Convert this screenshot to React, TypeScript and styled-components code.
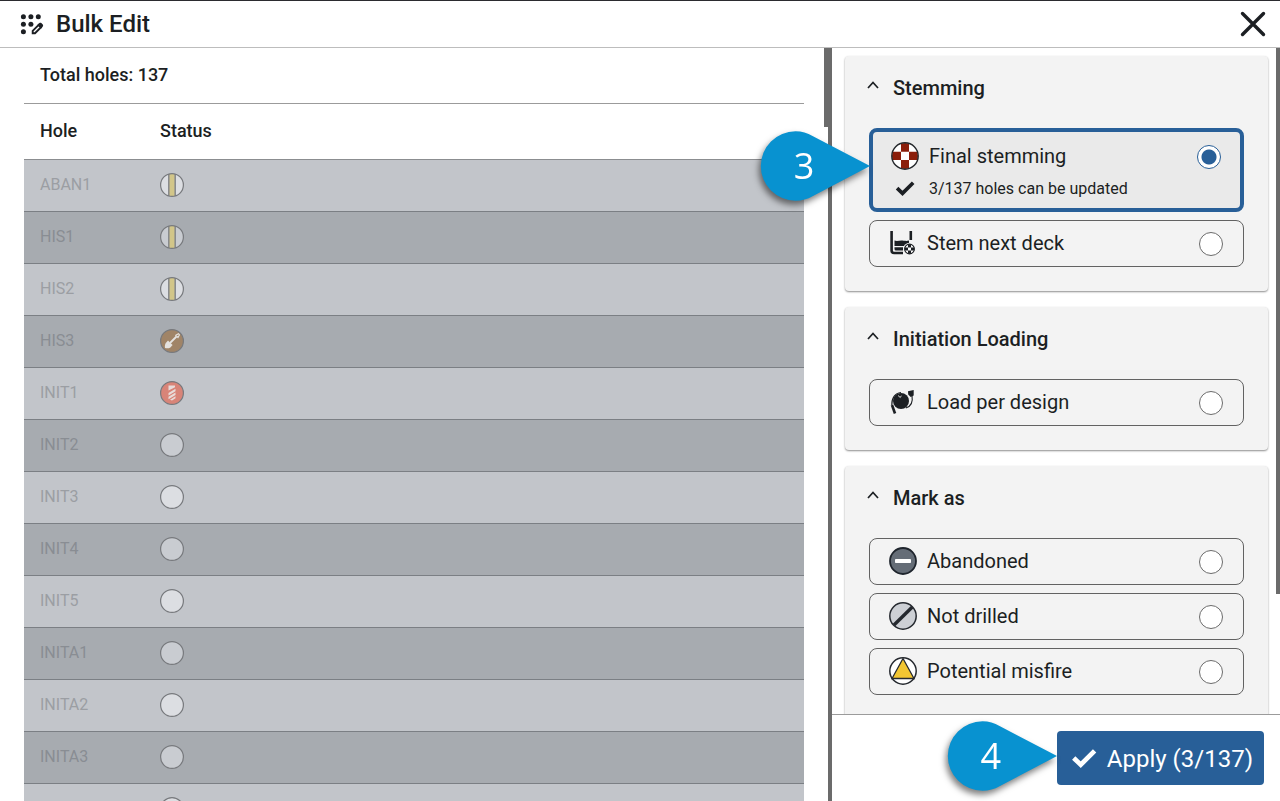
import React, { useState } from "react";
import type { ReactNode } from "react";
import styled, { createGlobalStyle } from "styled-components";

const GlobalStyle = createGlobalStyle`
  *, *::before, *::after { box-sizing: border-box; }
  body {
    margin: 0;
    background: #fff;
    color: #1c1f23;
    font-family: Roboto, "Liberation Sans", sans-serif;
  }
`;

const Screen = styled.div`
  display: flex;
  flex-direction: column;
  height: 100vh;
  overflow: hidden;
  border-top: 1px solid #2b2b2f;
`;

const Header = styled.header`
  flex: none;
  display: flex;
  align-items: center;
  gap: 12px;
  height: 47px;
  padding: 0 12px 0 20px;
  border-bottom: 1px solid #bdbdbd;
`;

const Title = styled.h1`
  flex: 1;
  margin: 0;
  font-size: 24px;
  line-height: 32px;
  font-weight: 500;
`;

const CloseButton = styled.button`
  display: flex;
  padding: 0;
  border: 0;
  background: none;
  color: inherit;
`;

const Main = styled.main`
  flex: 1;
  min-height: 0;
  display: grid;
  grid-template-columns: 65% 35%;
`;

const HolesPane = styled.section`
  display: flex;
  min-height: 0;
  border-right: 4px solid #6b6b6b;
`;

const HolesScroll = styled.div`
  flex: 1;
  overflow: hidden;
  padding: 0 20px 0 24px;
`;

const ScrollTrack = styled.div`
  flex: none;
  width: 4px;
`;

const ScrollThumb = styled.div<{ $length: string }>`
  height: ${(p) => p.$length};
  background: #6b6b6b;
`;

const HolesTable = styled.table`
  width: 100%;
  table-layout: fixed;
  border-collapse: separate;
  border-spacing: 0;
  text-align: left;
`;

const TotalCaption = styled.caption`
  height: 56px;
  padding: 0 16px;
  border-bottom: 1px solid #9b9b9b;
  font-size: 18px;
  line-height: 54px;
  font-weight: 500;
  text-align: left;
`;

const HeadCell = styled.th<{ $width?: string }>`
  width: ${(p) => p.$width ?? "auto"};
  height: 56px;
  padding: 0 16px 2px;
  border-bottom: 1px solid #8b8d90;
  font-size: 18px;
  font-weight: 500;
`;

const HoleRow = styled.tr`
  background: #c2c5ca;
  color: #9b9ea3;
  --status-fill: #dcdee2;

  &:nth-child(even) {
    background: #a7abb0;
    color: #898d93;
    --status-fill: #c9ccd1;
  }
`;

const HoleCell = styled.td`
  height: 52px;
  padding: 0 16px 2px;
  border-bottom: 1px solid #7b7f84;
  font-size: 16px;
  line-height: 16px;

  svg { display: block; }
`;

const ActionsPane = styled.aside`
  position: relative;
  display: flex;
  flex-direction: column;
  min-height: 0;
`;

const ActionsBody = styled.div`
  flex: 1;
  min-height: 0;
  display: flex;
`;

const CardList = styled.div`
  flex: 1;
  display: flex;
  flex-direction: column;
  gap: 16px;
  overflow: hidden;
  padding: 8px 8px 0 13px;
`;

const Card = styled.section`
  flex: none;
  padding: 0 24px 24px 22px;
  border-radius: 4px;
  background: #f3f3f3;
  box-shadow: 0 1px 2px rgba(0, 0, 0, 0.45);
`;

const CardToggle = styled.button`
  display: flex;
  align-items: center;
  gap: 12px;
  width: 100%;
  height: 72px;
  padding: 0 0 8px;
  border: 0;
  background: none;
  color: inherit;
  font: 500 20px/24px Roboto, "Liberation Sans", sans-serif;
  text-align: left;
`;

const OptionList = styled.div`
  display: flex;
  flex-direction: column;
  gap: 8px;
  padding-left: 2px;
`;

const Option = styled.label<{ $selected: boolean }>`
  display: grid;
  grid-template-columns: 28px 1fr 24px;
  gap: 3px 10px;
  align-items: center;
  padding: ${(p) => (p.$selected ? "9px 19px 4px 18px" : "7px 20px 8px 19px")};
  border: ${(p) => (p.$selected ? "4px solid #285f98" : "1px solid #626262")};
  border-radius: 8px;
  background: ${(p) => (p.$selected ? "#eaeaea" : "transparent")};

  svg { display: block; justify-self: center; }
`;

const OptionText = styled.span`
  font-size: 20px;
  line-height: 30px;
`;

const OptionNote = styled.span`
  font-size: 16px;
  line-height: 30px;
`;

const Radio = styled.input`
  appearance: none;
  width: 24px;
  height: 24px;
  margin: 2px 0 0;
  border: 1px solid #6b6b6b;
  border-radius: 50%;
  background: #fff;

  &:checked {
    border-color: #285f98;
    background: radial-gradient(circle, #285f98 7px, #fff 8px);
  }
`;

const Footer = styled.footer`
  flex: none;
  display: flex;
  justify-content: flex-end;
  padding: 16px;
  border-top: 1px solid #9b9b9b;
`;

const ApplyWrap = styled.div`
  position: relative;
`;

const ApplyButton = styled.button`
  display: flex;
  align-items: center;
  gap: 10px;
  height: 54px;
  padding: 2px 11px 0 14px;
  border: 0;
  border-radius: 4px;
  background: #285f98;
  color: #fff;
  font: 400 24px/28px Roboto, "Liberation Sans", sans-serif;
`;

const CalloutBox = styled.div<{ $top: number; $right: string }>`
  position: absolute;
  z-index: 1;
  top: ${(p) => p.$top}px;
  right: ${(p) => p.$right};
  width: 110px;
  height: 70px;
  filter: drop-shadow(-2px 4px 3px rgba(0, 0, 0, 0.5));

  svg { display: block; }
`;

const CalloutNumber = styled.span`
  position: absolute;
  inset: 0 22px 0 0;
  color: #fff;
  font: 400 36px/70px "Open Sans", "Noto Sans", sans-serif;
  text-align: center;
`;

function Callout({ n, top, right }: { n: number; top: number; right: string }) {
  return (
    <CalloutBox $top={top} $right={right}>
      <svg width="110" height="70" viewBox="0 0 110 70">
        <path d="M110 35 L53 5.200 C47 2 42 0.300 35.500 0.300 A34.700 34.700 0 1 0 35.500 69.700 C42 69.700 47 68.300 53 65 Z" fill="#0892d0" />
      </svg>
      <CalloutNumber>{n}</CalloutNumber>
    </CalloutBox>
  );
}

type Status = "stemmed" | "backfill" | "drilled" | "empty";

function StatusIcon({ status }: { status: Status }) {
  const fill = { stemmed: "var(--status-fill)", backfill: "#a08467", drilled: "#d88478", empty: "var(--status-fill)" }[status];
  return (
    <svg width="24" height="24" viewBox="0 0 24 24" role="img" aria-label={status}>
      <circle cx="12" cy="12" r="11.400" fill={fill} />
      {status === "stemmed" && (
        <>
          <rect x="8.600" y="1" width="6.800" height="22" fill="#d2c689" />
          <path d="M8.800 1v22M15.200 1v22" stroke="#85888c" strokeWidth="1.500" />
        </>
      )}
      {status === "backfill" && (
        <>
          <path d="M10 14l6.500-6.500" stroke="#e4e2df" strokeWidth="1.800" />
          <path d="M15.800 6.300l2.700-1.500 1 1-1.500 2.700z" fill="none" stroke="#e4e2df" strokeWidth="1.100" />
          <path d="M8 11.400l4.600 4.600-2.200 2.400c-1.500 1-3.600 1.200-5.400.6-.4-1.900 0-4 1-5.300z" fill="#e4e2df" />
        </>
      )}
      {status === "drilled" && (
        <path d="M8.500 4.500H15v1.800L8.500 9.500zM8.500 12l7-4.300v2.500l-7 4.300zM8.500 15.800l7-4.200v2.500l-7 4.200zM10 18.700l5.500-3.400v2L12 19.500z" fill="#e8dcda" />
      )}
      <circle cx="12" cy="12" r="11.400" fill="none" stroke="#77797d" strokeWidth="1.200" />
    </svg>
  );
}

function BulkEditIcon() {
  return (
    <svg width="24" height="24" viewBox="0 0 24 24" aria-hidden="true">
      <g fill="#1c1f23">
        <circle cx="3.400" cy="4.700" r="2.500" />
        <circle cx="10.900" cy="4.700" r="2.500" />
        <circle cx="18.300" cy="4.700" r="2.500" />
        <circle cx="3.400" cy="12.200" r="2.500" />
        <circle cx="10.900" cy="12.200" r="2.500" />
        <circle cx="3.400" cy="19.700" r="2.500" />
      </g>
      <path d="M12.700 18.900l5.800-5.800 2.300 2.300-5.800 5.800h-2.300z" fill="none" stroke="#1c1f23" strokeWidth="1.900" />
      <path d="M17.500 12.600l1.900-1.600c.6-.5 1.300-.5 1.900 0l1.500 1.500c.5.600.5 1.300 0 1.900L21.300 16.400z" fill="#1c1f23" />
    </svg>
  );
}

function CloseIcon() {
  return (
    <svg width="30" height="30" viewBox="0 0 30 30" aria-hidden="true">
      <path d="M4.500 4.500l21 21M25.500 4.500l-21 21" stroke="#1c1f23" strokeWidth="3.400" strokeLinecap="round" />
    </svg>
  );
}

function ChevronIcon() {
  return (
    <svg width="14" height="16" viewBox="0 0 14 16" aria-hidden="true">
      <path d="M1 8l5-5.500L11 8" fill="none" stroke="#1c1f23" strokeWidth="1.700" />
    </svg>
  );
}

function CheckIcon({ width, color }: { width: number; color: string }) {
  return (
    <svg width={width} height={width} viewBox="0 0 24 24" aria-hidden="true">
      <path d="M2.500 11L9 17.200 21.800 4.500" fill="none" stroke={color} strokeWidth="4.400" />
    </svg>
  );
}

function FinalStemmingIcon() {
  return (
    <svg width="28" height="28" viewBox="0 0 28 28" aria-hidden="true">
      <clipPath id="stemming-disc"><circle cx="14" cy="14" r="13" /></clipPath>
      <circle cx="14" cy="14" r="13" fill="#fff" />
      <path clipPath="url(#stemming-disc)" fill="#8b1e0b" d="M10 0h8v9.800h-8zM10 18h8v10h-8zM1 9.800h9V18H1zM18 9.800h9V18h-9z" />
      <circle cx="14" cy="14" r="13.200" fill="none" stroke="#25282c" strokeWidth="1.400" />
    </svg>
  );
}

function StemNextDeckIcon() {
  return (
    <svg width="28" height="28" viewBox="0 0 28 28" aria-hidden="true">
      <path d="M2.600 2v19.500q0 2.500 2.500 2.500H14M21.800 2v9" fill="none" stroke="#1c1f23" strokeWidth="2.600" />
      <path d="M5.500 11.500c3 1.200 5-.4 8 0s4 .6 6.500 0v3.300c-2 .5-3.500 1.200-5 2.200H5.500zM5.500 18.200H14v3.200H7q-1.500 0-1.500-1.500z" fill="#1c1f23" />
      <circle cx="20.500" cy="20" r="6.200" fill="#f3f3f3" />
      <circle cx="20.500" cy="20" r="4.900" fill="#fff" stroke="#1c1f23" strokeWidth="1.100" />
      <path d="M19 15.300h3v3.200h-3zM19 21.500h3v3.200h-3zM15.800 18.500H19v3h-3.200zM22 18.500h3.200v3H22z" fill="#1c1f23" />
    </svg>
  );
}

function LoadPerDesignIcon() {
  return (
    <svg width="28" height="28" viewBox="-1 0 28 28" aria-hidden="true">
      <circle cx="11" cy="13" r="8" fill="#1c1f23" />
      <path d="M11 4.500C5 5 1.500 10 1.800 17M22 7.500c1 6-1 11-6.200 12.500" fill="none" stroke="#1c1f23" strokeWidth="1.100" />
      <path d="M2 17l3 8.500" stroke="#1c1f23" strokeWidth="2.600" />
      <path d="M18 3.200L23.700 2v5.500l-3 1.400-2.500-2.500z" fill="#1c1f23" />
      <path d="M8 7.500l2.300 2 1-1.800" fill="none" stroke="#d5d5d5" strokeWidth="1" />
    </svg>
  );
}

function AbandonedIcon() {
  return (
    <svg width="28" height="28" viewBox="0 0 28 28" aria-hidden="true">
      <circle cx="14" cy="14" r="13" fill="#656d77" stroke="#1f252d" strokeWidth="1.800" />
      <rect x="6" y="12" width="16" height="4" rx="0.800" fill="#fff" />
    </svg>
  );
}

function NotDrilledIcon() {
  return (
    <svg width="28" height="28" viewBox="0 0 28 28" aria-hidden="true">
      <circle cx="14" cy="14" r="13.200" fill="#cdd0d5" stroke="#25292f" strokeWidth="1.500" />
      <path d="M5 23L23.300 5" stroke="#25292f" strokeWidth="3.400" />
    </svg>
  );
}

function MisfireIcon() {
  return (
    <svg width="28" height="28" viewBox="0 0 28 28" aria-hidden="true">
      <circle cx="14" cy="14" r="13.200" fill="#fff" stroke="#25292f" strokeWidth="1.500" />
      <path d="M14 1.500L25 21.500H3z" fill="#f2c633" stroke="#25292f" strokeWidth="1.300" />
    </svg>
  );
}

const holes: [string, Status][] = [
  ["ABAN1", "stemmed"],
  ["HIS1", "stemmed"],
  ["HIS2", "stemmed"],
  ["HIS3", "backfill"],
  ["INIT1", "drilled"],
  ["INIT2", "empty"],
  ["INIT3", "empty"],
  ["INIT4", "empty"],
  ["INIT5", "empty"],
  ["INITA1", "empty"],
  ["INITA2", "empty"],
  ["INITA3", "empty"],
  ["INITA4", "empty"],
];

const groups: { title: string; options: { label: string; icon: ReactNode }[] }[] = [
  {
    title: "Stemming",
    options: [
      { label: "Final stemming", icon: <FinalStemmingIcon /> },
      { label: "Stem next deck", icon: <StemNextDeckIcon /> },
    ],
  },
  { title: "Initiation Loading", options: [{ label: "Load per design", icon: <LoadPerDesignIcon /> }] },
  {
    title: "Mark as",
    options: [
      { label: "Abandoned", icon: <AbandonedIcon /> },
      { label: "Not drilled", icon: <NotDrilledIcon /> },
      { label: "Potential misfire", icon: <MisfireIcon /> },
    ],
  },
];

export default function App() {
  const [action, setAction] = useState("Final stemming");
  return (
    <Screen>
      <GlobalStyle />
      <Header>
        <BulkEditIcon />
        <Title>Bulk Edit</Title>
        <CloseButton aria-label="Close"><CloseIcon /></CloseButton>
      </Header>
      <Main>
        <HolesPane>
          <HolesScroll>
            <HolesTable>
              <TotalCaption>Total holes: 137</TotalCaption>
              <thead>
                <tr>
                  <HeadCell $width="120px">Hole</HeadCell>
                  <HeadCell>Status</HeadCell>
                </tr>
              </thead>
              <tbody>
                {holes.map(([name, status]) => (
                  <HoleRow key={name}>
                    <HoleCell>{name}</HoleCell>
                    <HoleCell><StatusIcon status={status} /></HoleCell>
                  </HoleRow>
                ))}
              </tbody>
            </HolesTable>
          </HolesScroll>
          <ScrollTrack><ScrollThumb $length="10.5%" /></ScrollTrack>
        </HolesPane>
        <ActionsPane>
          <ActionsBody>
            <CardList>
              {groups.map((group) => (
                <Card key={group.title}>
                  <CardToggle aria-expanded="true"><ChevronIcon />{group.title}</CardToggle>
                  <OptionList>
                    {group.options.map(({ label, icon }) => (
                      <Option key={label} $selected={action === label}>
                        {icon}
                        <OptionText>{label}</OptionText>
                        <Radio type="radio" name="action" checked={action === label} onChange={() => setAction(label)} />
                        {action === label && (
                          <>
                            <CheckIcon width={20} color="#1c1f23" />
                            <OptionNote>3/137 holes can be updated</OptionNote>
                          </>
                        )}
                      </Option>
                    ))}
                  </OptionList>
                </Card>
              ))}
            </CardList>
            <ScrollTrack><ScrollThumb $length="82%" /></ScrollTrack>
          </ActionsBody>
          <Footer>
            <ApplyWrap>
              <ApplyButton><CheckIcon width={26} color="#fff" />Apply (3/137)</ApplyButton>
              <Callout n={4} top={-10} right="100%" />
            </ApplyWrap>
          </Footer>
          <Callout n={3} top={83} right="calc(100% - 38px)" />
        </ActionsPane>
      </Main>
    </Screen>
  );
}
